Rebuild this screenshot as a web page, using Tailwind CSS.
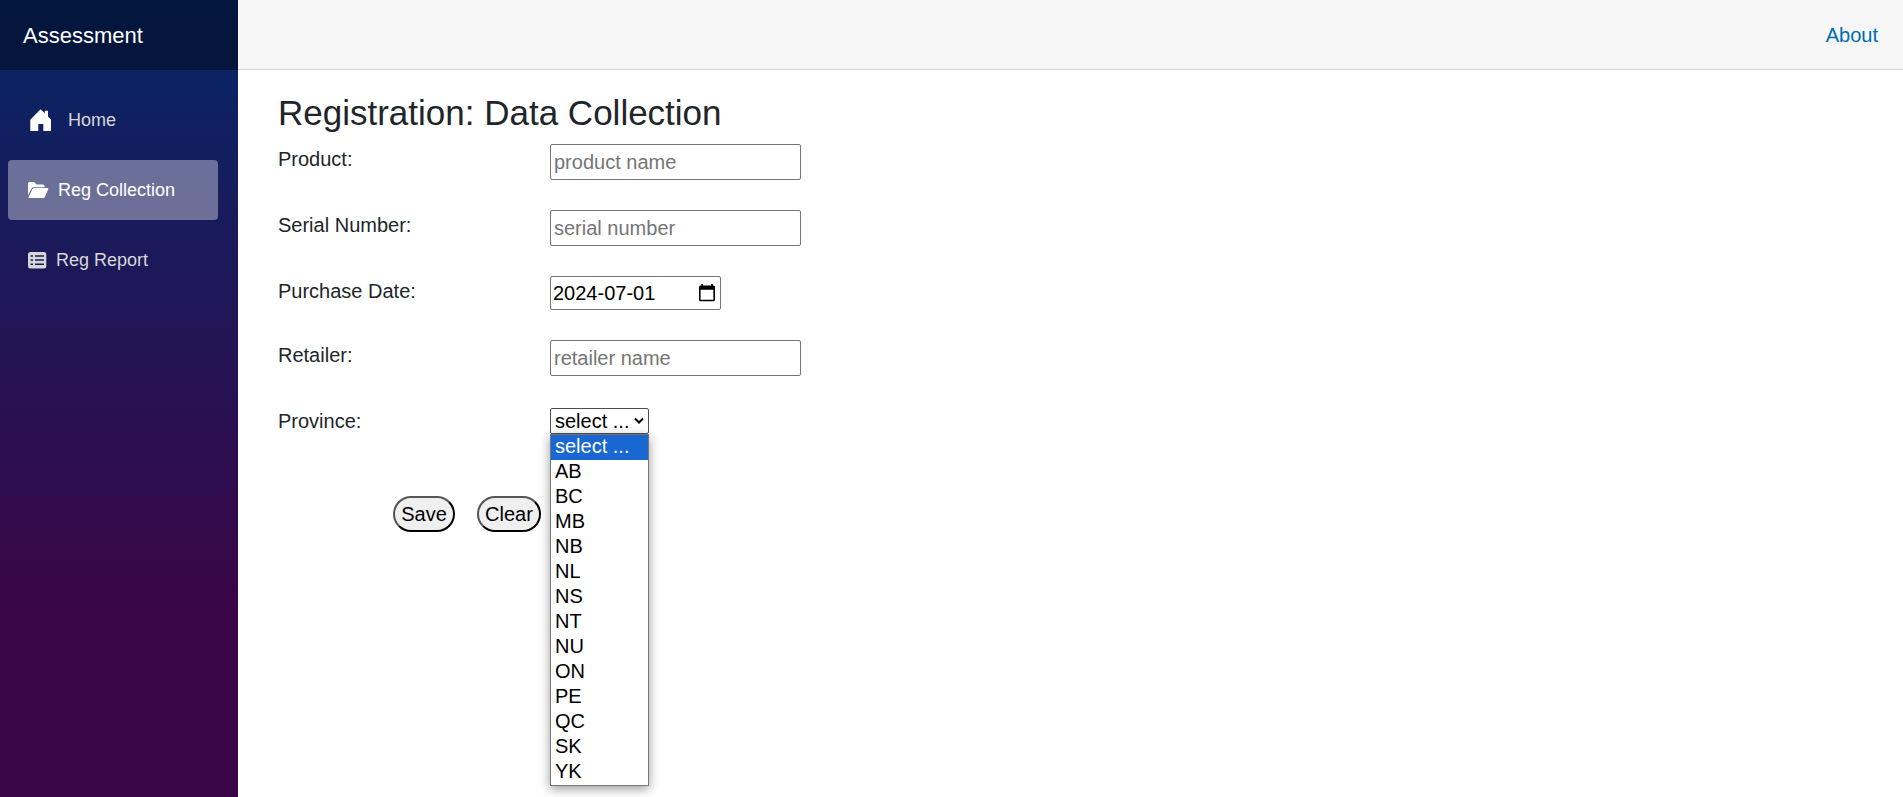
<!DOCTYPE html>
<html lang="en">
<head>
<meta charset="utf-8">
<title>Assessment</title>
<script src="https://cdn.jsdelivr.net/npm/@tailwindcss/browser@4"></script>
</head>
<body class="flex h-screen overflow-hidden bg-white font-['Liberation_Sans',Arial,sans-serif] text-[20px] leading-[30px] text-[#212529]">
  <aside class="h-full w-[238px] shrink-0 bg-[linear-gradient(180deg,rgb(5,39,103)_0%,#3a0647_76%)]">
    <div class="flex h-[70px] items-center bg-black/40 pt-px pl-[23px] text-[22px] text-white">Assessment</div>
    <nav class="flex flex-col gap-[10px] pt-5 pr-5 pl-2 text-[18px] text-[#d7d7d7]">
      <a class="flex h-[60px] items-center pl-[21px]">
        <svg class="mr-[16px] h-[23px] w-[23px]" viewBox="0 0 23 23" fill="#fff"><path d="M1.300 10.700 11.500.3l4.300 4V1.700H19V7.500l3 3V22h-7.700v-7H9.300v7h-8z"/></svg>
        <span>Home</span>
      </a>
      <a class="flex h-[60px] items-center rounded-[4px] bg-white/37 pl-5 text-white">
        <svg class="mr-[9px] h-[18px] w-[21px]" viewBox="0 0 22 18" preserveAspectRatio="none" fill="#fff"><path d="M0 14.100V2.500Q0 1 1.500 1h4.800L9 3.400h6.400Q17.200 3.400 17.400 5.200v1H5.800Q4.400 6.200 3.800 7.400z"/><path d="M.4 16.800 4.600 8.300Q5.100 7.100 6.400 7.100h14.100q1.200 0 .7 1.100l-3.600 7.700q-.6 1.200-1.800 1.200H.5z"/></svg>
        <span>Reg Collection</span>
      </a>
      <a class="flex h-[60px] items-center pl-5">
        <svg class="mr-[9px] h-[18px] w-[19px]" viewBox="0 0 19 18"><rect x="0" y="1" width="18.300" height="16.500" rx="2.500" fill="#d7d7d7"/><path d="M2.500 5h2.500M7 5h9M2.500 9h2.500M7 9h9M2.500 13.200h2.500M7 13.200h9" stroke="#1c1959" stroke-width="1.600"/></svg>
        <span>Reg Report</span>
      </a>
    </nav>
  </aside>
  <main class="min-w-0 flex-1">
    <header class="flex h-[70px] items-center justify-end border-b border-[#d6d5d5] bg-[#f7f7f7] pr-[25px]">
      <a class="text-[#006bb7]">About</a>
    </header>
    <form class="pt-[22px] pl-[40px]">
      <h3 class="mb-[10px] text-[35px] leading-[42px]">Registration: Data Collection</h3>
      <div class="grid grid-cols-[272px_251px] grid-rows-[66px_66px_64px_66px_90px] items-start">
        <label>Product:</label>
        <input class="h-9 w-full rounded-[2px] border border-[#767676] px-[3px] placeholder:text-[#757575]" placeholder="product name">
        <label>Serial Number:</label>
        <input class="h-9 w-full rounded-[2px] border border-[#767676] px-[3px] placeholder:text-[#757575]" placeholder="serial number">
        <label>Purchase Date:</label>
        <div class="flex h-[34px] w-[171px] items-center justify-between rounded-[2px] border border-[#767676] pr-[5px] pl-[2px] text-black">
          <span>2024-07-01</span>
          <svg class="h-[18px] w-[16px]" viewBox="0 0 16 18"><path d="M2.200 0h1.600v1.600h8.400V0h1.600v1.600h.7Q16 1.600 16 3.100v12.700Q16 17.300 14.500 17.300h-13Q0 17.300 0 15.800V3.100Q0 1.600 1.500 1.600h.7zM1.600 5.800v9.900h12.800V5.800z" fill="#000" fill-rule="evenodd"/></svg>
        </div>
        <label>Retailer:</label>
        <input class="h-9 w-full rounded-[2px] border border-[#767676] px-[3px] placeholder:text-[#757575]" placeholder="retailer name">
        <label>Province:</label>
        <div class="relative mt-[2px] w-[99px] leading-[25px] text-black">
          <div class="flex h-[26px] items-center justify-between rounded-[2px] border border-[#4f4f4f] pr-[4px] pl-[4px]">
            <span>select ...</span>
            <svg class="h-[8px] w-[10px]" viewBox="0 0 10 8" fill="none" stroke="#000" stroke-width="2"><path d="m1 1.500 4 4 4-4"/></svg>
          </div>
          <ul class="absolute top-[26px] left-0 w-[99px] border border-[#767676] bg-white shadow-[0_3px_10px_rgba(0,0,0,0.4)] *:h-[25px] *:pl-[4px] *:leading-[23px]">
            <li class="bg-[#1967d2] text-white">select ...</li>
            <li>AB</li><li>BC</li><li>MB</li><li>NB</li><li>NL</li><li>NS</li><li>NT</li><li>NU</li><li>ON</li><li>PE</li><li>QC</li><li>SK</li><li>YK</li>
          </ul>
        </div>
      </div>
      <div class="flex gap-[22px] pl-[115px]">
        <button type="button" class="h-9 w-[62px] rounded-[20px] border-2 border-t-[#555] border-l-[#555] border-r-black border-b-black bg-[#efefef] text-black">Save</button>
        <button type="button" class="h-9 w-[64px] rounded-[20px] border-2 border-t-[#555] border-l-[#555] border-r-black border-b-black bg-[#efefef] text-black">Clear</button>
      </div>
    </form>
  </main>
</body>
</html>
